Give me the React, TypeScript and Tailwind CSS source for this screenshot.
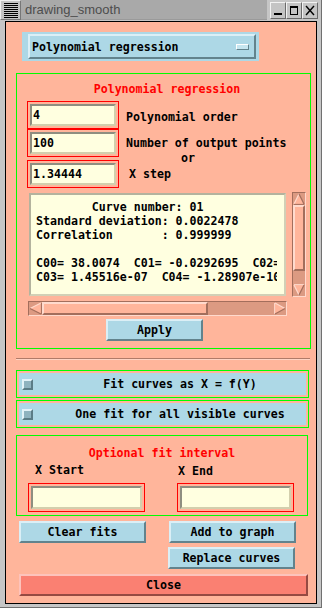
import React from "react";

const MONO = "font-['DejaVu_Sans_Mono',monospace] font-bold text-[11.6px] leading-[14px]";
const BLUE_RAISED =
  "bg-[#add8e6] border-2 border-t-[#dbeff6] border-l-[#dbeff6] border-r-[#62838d] border-b-[#62838d]";
const S_LIGHT = "#ffdacd";
const S_DARK = "#a36e5c";
const S_BG = "#ffb59b";

function Entry({ size, value }: { size: string; value?: string }) {
  return (
    <div className={`${size} border border-[#ff0000] p-[2px] flex`}>
      <div className="flex-1 bg-[#ffffe0] border-2 border-t-[#8e8e80] border-l-[#8e8e80] border-r-[#d3cfad] border-b-[#d3cfad] flex items-center pl-[1px] text-black">
        {value}
      </div>
    </div>
  );
}

function ArrowUp() {
  return (
    <svg width="12" height="12" viewBox="0 0 12 12" className="block">
      <polygon points="6,1 11,11 1,11" fill={S_BG} />
      <line x1="1" y1="11" x2="6" y2="1" stroke={S_LIGHT} strokeWidth="1.2" />
      <line x1="6" y1="1" x2="11" y2="11" stroke={S_DARK} strokeWidth="1.2" />
      <line x1="1" y1="11.4" x2="11" y2="11.4" stroke={S_DARK} strokeWidth="1" />
    </svg>
  );
}

function ArrowDown() {
  return (
    <svg width="12" height="12" viewBox="0 0 12 12" className="block">
      <polygon points="1,1 11,1 6,11" fill={S_BG} />
      <line x1="1" y1="0.6" x2="11" y2="0.6" stroke={S_LIGHT} strokeWidth="1" />
      <line x1="1" y1="1" x2="6" y2="11" stroke={S_LIGHT} strokeWidth="1.2" />
      <line x1="11" y1="1" x2="6" y2="11" stroke={S_DARK} strokeWidth="1.2" />
    </svg>
  );
}

function ArrowLeft() {
  return (
    <svg width="13" height="13" viewBox="0 0 13 13" className="block">
      <polygon points="1,6.5 12,1 12,12" fill={S_BG} />
      <line x1="1" y1="6.5" x2="12" y2="1" stroke={S_LIGHT} strokeWidth="1.2" />
      <line x1="1" y1="6.5" x2="12" y2="12" stroke={S_DARK} strokeWidth="1.2" />
      <line x1="12.4" y1="1" x2="12.4" y2="12" stroke={S_DARK} strokeWidth="1" />
    </svg>
  );
}

function ArrowRight() {
  return (
    <svg width="12" height="13" viewBox="0 0 12 13" className="block">
      <polygon points="1,1 11,6.5 1,12" fill={S_BG} />
      <line x1="0.6" y1="1" x2="0.6" y2="12" stroke={S_LIGHT} strokeWidth="1" />
      <line x1="1" y1="1" x2="11" y2="6.5" stroke={S_LIGHT} strokeWidth="1.2" />
      <line x1="1" y1="12" x2="11" y2="6.5" stroke={S_DARK} strokeWidth="1.2" />
    </svg>
  );
}

function TitleBar() {
  const lines = [0, 1, 2, 3, 4, 5, 6, 7];
  return (
    <div className="h-[20px] flex">
      <div className="w-[21px] h-[20px] bg-[#c4c4c4] border border-t-[#eeeeee] border-l-[#eeeeee] border-r-[#777777] border-b-[#777777] flex flex-col justify-center items-center gap-[1px]">
        {lines.map((i) => (
          <div key={i} className="w-[14px] h-[1px] bg-black" />
        ))}
      </div>
      <div className="w-[246px] h-[20px] bg-[#a9a9a9] border-b border-[#9a9a9a] flex items-center pl-[4px] text-[#4d4d4d] font-['Liberation_Sans',sans-serif] text-[13px] leading-none">
        drawing_smooth
      </div>
      <div className="flex-1 flex pl-[3px] pt-[2px]">
        <div className="w-[16px] h-[17px] border border-t-[#f2f2f2] border-l-[#f2f2f2] border-r-[#6a6a6a] border-b-[#6a6a6a] bg-[#c4c4c4]">
          <svg width="14" height="15" viewBox="0 0 14 15" className="block">
            <rect x="3" y="10" width="8" height="2" fill="black" />
          </svg>
        </div>
        <div className="w-[16px] h-[17px] border border-t-[#f2f2f2] border-l-[#f2f2f2] border-r-[#6a6a6a] border-b-[#6a6a6a] bg-[#c4c4c4]">
          <svg width="14" height="15" viewBox="0 0 14 15" className="block">
            <rect x="3.5" y="3.5" width="7" height="8" fill="none" stroke="black" strokeWidth="1" />
            <rect x="3" y="3" width="8" height="2" fill="black" />
          </svg>
        </div>
        <div className="w-[16px] h-[17px] border border-t-[#f2f2f2] border-l-[#f2f2f2] border-r-[#6a6a6a] border-b-[#6a6a6a] bg-[#c4c4c4]">
          <svg width="14" height="15" viewBox="0 0 14 15" className="block">
            <line x1="3" y1="3" x2="11" y2="12" stroke="black" strokeWidth="1.4" />
            <line x1="11" y1="3" x2="3" y2="12" stroke="black" strokeWidth="1.4" />
          </svg>
        </div>
      </div>
    </div>
  );
}

const TEXT = `        Curve number: 01
Standard deviation: 0.0022478
Correlation       : 0.999999

C00= 38.0074  C01= -0.0292695  C02= 0.000231456
C03= 1.45516e-07  C04= -1.28907e-10`;

export default function App() {
  return (
    <div className="w-[322px] h-[608px] bg-[#c6c6c6] flex flex-col overflow-hidden border-r border-b border-[#707070]">
      <TitleBar />
      <div className={`ml-[5px] mt-[1px] w-[312px] h-[583px] border border-black bg-[#ffb59b] flex flex-col items-start pl-[10px] text-black ${MONO}`}>
        {/* dropdown */}
        <div className="ml-[6px] mt-[10px] w-[237px] h-[29px] bg-[#add8e6] pl-[6px] pt-[2px] pr-[3px] pb-[2px] flex">
          <div className={`flex-1 ${BLUE_RAISED} flex items-center pl-[2px]`}>
            <span>Polynomial regression</span>
            <div className="ml-auto mr-[5px] w-[13px] h-[6px] bg-[#c6e6f0] border border-t-white border-l-white border-r-[#62838d] border-b-[#62838d]" />
          </div>
        </div>

        {/* main green group */}
        <div className="mt-[12px] w-[295px] h-[276px] border border-[#00ff00] flex flex-col">
          <div className="mt-[8px] h-[14px] text-center pl-[7px] text-[#ff0000]">Polynomial regression</div>

          <div className="mt-[5px] ml-[10px] flex items-center">
            <Entry size="w-[92px] h-[28px]" value="4" />
            <span className="ml-[7px] mt-[4px]">Polynomial order</span>
          </div>
          <div className="ml-[10px] flex items-center">
            <Entry size="w-[92px] h-[28px]" value="100" />
            <span className="ml-[7px]">Number of output points</span>
          </div>
          <div className="h-[3px] flex items-center pl-[164px]">
            <span className="leading-none">or</span>
          </div>
          <div className="ml-[10px] flex items-center">
            <Entry size="w-[92px] h-[28px]" value="1.34444" />
            <span className="ml-[10px]">X step</span>
          </div>

          {/* text + vertical scrollbar */}
          <div className="mt-[4px] ml-[12px] flex items-start">
            <div className="mt-[1px] w-[257px] h-[103px] bg-[#ffffe0] border-2 border-t-[#b4b39e] border-l-[#b4b39e] border-r-[#d2d0b6] border-b-[#d2d0b6] pt-[5px] pl-[5px] pr-[7px]">
              <div className="w-full h-full overflow-hidden whitespace-pre">{TEXT}</div>
            </div>
            <div className="ml-[6px] w-[14px] h-[105px] bg-[#dc9a82] border border-t-[#a36e5c] border-l-[#a36e5c] border-r-[#ffdacd] border-b-[#ffdacd] flex flex-col">
              <ArrowUp />
              <div className="h-[66px] bg-[#ffb59b] border-2 border-t-[#ffdacd] border-l-[#ffdacd] border-r-[#a36e5c] border-b-[#a36e5c]" />
              <div className="flex-1" />
              <ArrowDown />
            </div>
          </div>

          {/* horizontal scrollbar */}
          <div className="mt-[4px] ml-[11px] w-[259px] h-[15px] bg-[#dc9a82] border border-t-[#a36e5c] border-l-[#a36e5c] border-r-[#ffdacd] border-b-[#ffdacd] flex">
            <ArrowLeft />
            <div className="w-[166px] bg-[#ffb59b] border-2 border-t-[#ffdacd] border-l-[#ffdacd] border-r-[#a36e5c] border-b-[#a36e5c]" />
            <div className="flex-1" />
            <ArrowRight />
          </div>

          <div className={`mt-[3px] ml-[89px] w-[97px] h-[22px] ${BLUE_RAISED} flex items-center justify-center`}>
            Apply
          </div>
        </div>

        {/* separator */}
        <div className="mt-[9px] w-[294px] h-[2px] border-t border-b border-t-[#b07b68] border-b-[#ffd3c3]" />

        {/* check rows */}
        <div className="mt-[10px] w-[293px] h-[28px] border border-[#00ff00] p-[2px] flex">
          <div className="flex-1 bg-[#add8e6] flex items-center">
            <div className="ml-[3px] w-[11px] h-[11px] bg-[#8fb3bf] border-2 border-t-[#e4f3f8] border-l-[#e4f3f8] border-r-[#5b7c86] border-b-[#5b7c86]" />
            <div className="ml-[21px] flex-1 text-center">Fit curves as X = f(Y)</div>
          </div>
        </div>
        <div className="mt-[2px] w-[293px] h-[28px] border border-[#00ff00] p-[2px] flex">
          <div className="flex-1 bg-[#add8e6] flex items-center">
            <div className="ml-[3px] w-[11px] h-[11px] bg-[#8fb3bf] border-2 border-t-[#e4f3f8] border-l-[#e4f3f8] border-r-[#5b7c86] border-b-[#5b7c86]" />
            <div className="ml-[21px] flex-1 text-center">One fit for all visible curves</div>
          </div>
        </div>

        {/* optional interval */}
        <div className="mt-[7px] w-[292px] h-[81px] border border-[#00ff00] flex flex-col">
          <div className="mt-[10px] h-[14px] text-center text-[#ff0000]">Optional fit interval</div>
          <div className="mt-[3px] flex h-[14px]">
            <span className="ml-[18px] w-[143px]">X Start</span>
            <span className="mt-[1px]">X End</span>
          </div>
          <div className="mt-[6px] flex">
            <div className="ml-[11px]">
              <Entry size="w-[117px] h-[29px]" />
            </div>
            <div className="ml-[32px]">
              <Entry size="w-[117px] h-[29px]" />
            </div>
          </div>
        </div>

        {/* buttons */}
        <div className="mt-[5px] flex">
          <div className={`ml-[3px] w-[127px] h-[22px] ${BLUE_RAISED} flex items-center justify-center`}>Clear fits</div>
          <div className={`ml-[23px] w-[127px] h-[22px] ${BLUE_RAISED} flex items-center justify-center`}>Add to graph</div>
        </div>
        <div className={`mt-[4px] ml-[152px] w-[127px] h-[22px] ${BLUE_RAISED} flex items-center justify-center`}>
          Replace curves
        </div>
        <div className="mt-[5px] ml-[3px] w-[289px] h-[22px] bg-[#fa8072] border-2 border-t-[#fdc3bb] border-l-[#fdc3bb] border-r-[#954a42] border-b-[#954a42] flex items-center justify-center">
          Close
        </div>
      </div>
    </div>
  );
}
